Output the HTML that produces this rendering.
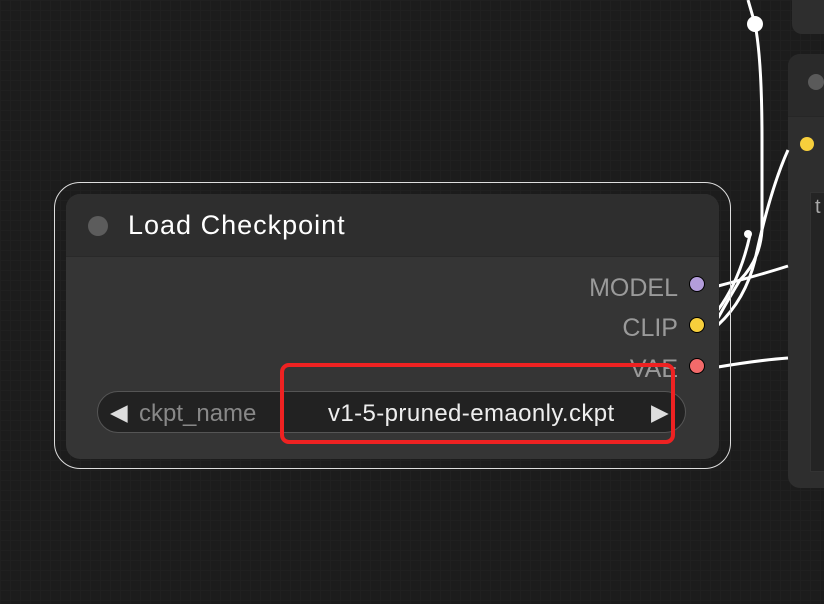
<!DOCTYPE html>
<html><head><style>
body{margin:0;width:824px;height:604px;overflow:hidden;background-color:#1c1c1c;
background-image:linear-gradient(#202020 1px,transparent 1px),linear-gradient(90deg,#202020 1px,transparent 1px);background-size:10px 10px;
font-family:"Liberation Sans",sans-serif;position:relative}
.a{position:absolute;white-space:nowrap}
</style></head><body>
<div class="a" style="left:792px;top:-10px;width:60px;height:44px;background:#2e2e2e;border-radius:10px"></div>
<div class="a" style="left:788px;top:54px;width:60px;height:434px;background:#2e2e2e;border-radius:12px"></div>
<div class="a" style="left:788px;top:54px;width:60px;height:62px;background:#2a2a2a;border-radius:12px 0 0 0;border-bottom:1px solid #262626"></div>
<div class="a" style="left:808px;top:74px;width:16px;height:16px;border-radius:50%;background:#5a5a5a"></div>
<div class="a" style="left:800px;top:137px;width:14px;height:14px;border-radius:50%;background:#f7cf3c"></div>
<div class="a" style="left:810px;top:192px;width:20px;height:278px;background:#242424;border:1px solid #333"></div>
<div class="a" style="left:815px;top:196px;color:#aaa;font-size:20px">t</div>
<svg class="a" style="left:0;top:0" width="824" height="604">
<g fill="none" stroke="#fff" stroke-width="3">
<path d="M748 0 L755 24 Q762 60 762 140 L762 230 Q760 260 740 280 Q728 300 718 318"/>
<path d="M718 286 Q760 275 788 266"/>
<path d="M718 325 Q745 300 755 260 Q770 190 788 150"/>
<path d="M718 310 Q740 280 750 235"/>
<path d="M718 367 Q760 360 788 358"/>
</g>
<circle cx="755" cy="24" r="8" fill="#fff"/>
<circle cx="748" cy="234" r="4" fill="#fff"/>
</svg>
<div class="a" style="left:54px;top:182px;width:675px;height:285px;border:1.5px solid #ddd;border-radius:26px"></div>
<div class="a" style="left:66px;top:194px;width:653px;height:265px;background:#353535;border-radius:14px;overflow:hidden">
<div style="height:62px;background:#2e2e2e;border-bottom:1px solid #292929"></div>
</div>
<div class="a" style="left:88px;top:216px;width:20px;height:20px;border-radius:50%;background:#5c5c5c"></div>
<div class="a" style="left:128px;top:210px;color:#fff;font-size:27px;letter-spacing:1px">Load Checkpoint</div>
<div class="a" style="right:146px;top:274px;color:#9a9a9a;font-size:25px">MODEL</div>
<div class="a" style="right:146px;top:314px;color:#9a9a9a;font-size:25px">CLIP</div>
<div class="a" style="right:146px;top:355px;color:#9a9a9a;font-size:25px">VAE</div>
<div class="a" style="left:689px;top:276px;width:14px;height:14px;border-radius:50%;background:#b39ddb;border:1.5px solid #000"></div>
<div class="a" style="left:689px;top:317px;width:14px;height:14px;border-radius:50%;background:#f7cf3c;border:1.5px solid #000"></div>
<div class="a" style="left:689px;top:358px;width:14px;height:14px;border-radius:50%;background:#f36a6a;border:1.5px solid #000"></div>
<div class="a" style="left:97px;top:391px;width:587px;height:40px;background:#222;border:1.5px solid #555;border-radius:21px"></div>
<div class="a" style="left:110px;top:399px;color:#ddd;font-size:23px">◀</div>
<div class="a" style="left:139px;top:400px;color:#888;font-size:24px">ckpt_name</div>
<div class="a" style="left:328px;top:400px;color:#eee;font-size:24px;letter-spacing:0.4px">v1-5-pruned-emaonly.ckpt</div>
<div class="a" style="left:651px;top:399px;color:#ddd;font-size:23px">▶</div>
<div class="a" style="left:280px;top:363px;width:387px;height:73px;border:4px solid #ee2222;border-radius:9px"></div>
</body></html>
